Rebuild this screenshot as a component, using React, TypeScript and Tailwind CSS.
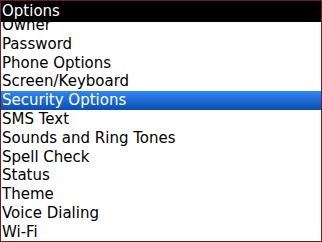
import React from 'react'

const ITEMS = [
  'Owner',
  'Password',
  'Phone Options',
  'Screen/Keyboard',
  'Security Options',
  'SMS Text',
  'Sounds and Ring Tones',
  'Spell Check',
  'Status',
  'Theme',
  'Voice Dialing',
  'Wi-Fi',
]

const SELECTED = 'Security Options'

export default function App() {
  return (
    <div
      className="flex h-[242px] w-[322px] flex-col overflow-hidden border border-[#6e1c28] bg-white text-[15px] leading-[19px]"
      style={{ fontFamily: '"DejaVu Sans", sans-serif' }}
    >
      <div className="h-[21px] shrink-0 bg-black pl-[1px] pt-[1px] leading-[19px] text-white">Options</div>
      <div className="flex-1 overflow-hidden">
        <ul className="-mt-[6px]">
          {ITEMS.map((item) => (
            <li
              key={item}
              className={
                item === SELECTED
                  ? 'h-[18.8px] bg-gradient-to-b from-[#3187f2] to-[#0b4db3] pl-[1px] leading-[19px] text-white'
                  : 'h-[18.8px] pl-[1px] leading-[19px] text-black'
              }
            >
              {item}
            </li>
          ))}
        </ul>
      </div>
    </div>
  )
}
